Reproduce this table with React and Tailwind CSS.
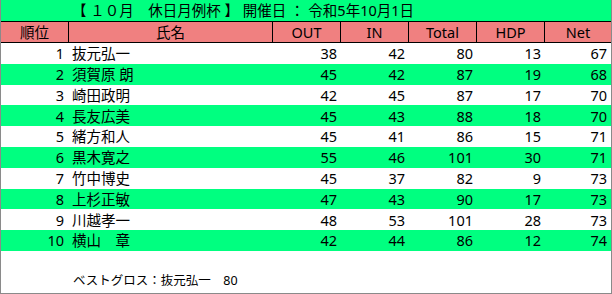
import React from "react";

const ROWS = [
  [1, "抜元弘一", 38, 42, 80, 13, 67],
  [2, "須賀原 朗", 45, 42, 87, 19, 68],
  [3, "崎田政明", 42, 45, 87, 17, 70],
  [4, "長友広美", 45, 43, 88, 18, 70],
  [5, "緒方和人", 45, 41, 86, 15, 71],
  [6, "黒木寛之", 55, 46, 101, 30, 71],
  [7, "竹中博史", 45, 37, 82, 9, 73],
  [8, "上杉正敏", 47, 43, 90, 17, 73],
  [9, "川越孝一", 48, 53, 101, 28, 73],
  [10, "横山\u3000章", 42, 44, 86, 12, 74],
];

const HEADERS = ["順位", "氏名", "OUT", "IN", "Total", "HDP", "Net"];

const COLS = "grid grid-cols-[68px_204px_68px_68px_68px_68px_66px]";

export default function App() {
  return (
    <div
      className="w-[612px] h-[294px] bg-white border-l border-r border-b border-[#8a8a8a] text-[14.5px] text-black overflow-hidden"
      style={{ fontFamily: '"Noto Sans", "Noto Sans CJK JP", sans-serif' }}
    >
      {/* title */}
      <div className="h-[21px] bg-[#00ff80] pl-[71px] flex items-center leading-none whitespace-pre">
        【 １０月　休日月例杯 】 開催日 ： 令和5年10月1日
      </div>

      {/* header */}
      <div className={`${COLS} h-[22px] bg-[#f08080] border-t border-b border-black`}>
        {HEADERS.map((h, i) => (
          <div
            key={h}
            className={`flex items-center justify-center leading-none ${
              i < HEADERS.length - 1 ? "border-r border-black" : ""
            }`}
          >
            {h}
          </div>
        ))}
      </div>

      {/* body */}
      {ROWS.map((r, idx) => (
        <div
          key={r[0]}
          className={`${COLS} h-[20.8px] leading-none ${idx % 2 === 1 ? "bg-[#00ff80]" : "bg-white"}`}
        >
          <div className="flex items-center justify-end pr-[5px]">{r[0]}</div>
          <div className="flex items-center pl-[3px] whitespace-pre">{r[1]}</div>
          {r.slice(2).map((v, j) => (
            <div key={j} className="flex items-center justify-end pr-[4px]">
              {v}
            </div>
          ))}
        </div>
      ))}

      <div className="pl-[72px] pt-[24px] leading-none whitespace-pre text-[12.5px]">
        ベストグロス：抜元弘一　80
      </div>
    </div>
  );
}
